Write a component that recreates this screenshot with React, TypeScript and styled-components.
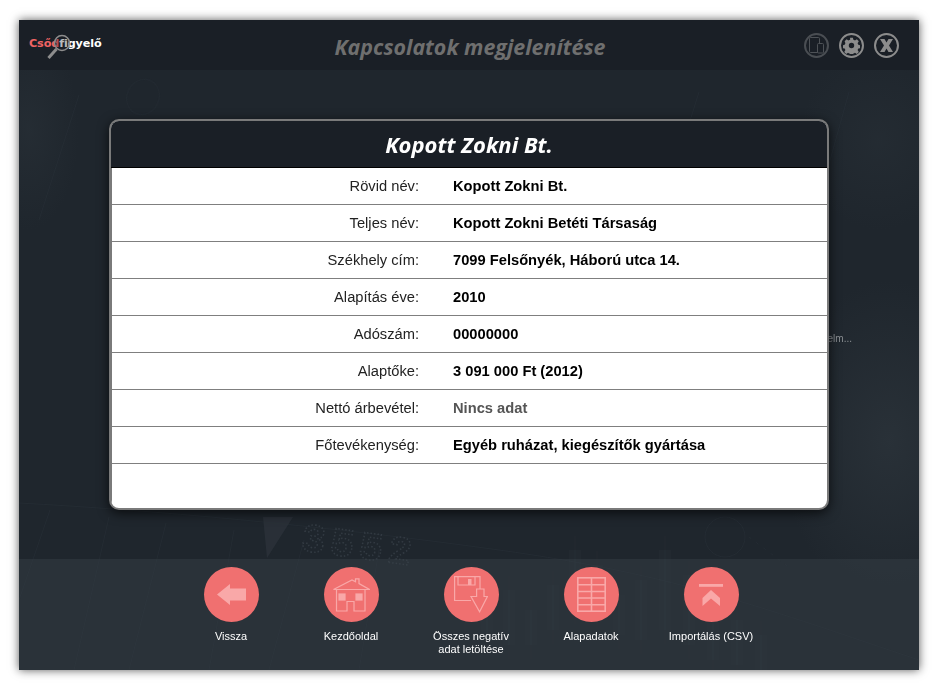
import React from "react";
import styled, { createGlobalStyle } from "styled-components";

const Global = createGlobalStyle`
  html, body { margin: 0; padding: 0; background: #fff; }
  body { font-family: "Liberation Sans", Arial, sans-serif; }
`;

const Page = styled.div`
  width: 941px;
  height: 692px;
  padding: 20px 22px 22px 19px;
  box-sizing: border-box;
  overflow: hidden;
`;

const Frame = styled.div`
  position: relative;
  width: 900px;
  height: 650px;
  display: flex;
  flex-direction: column;
  overflow: hidden;
  background: #1f262d;
  box-shadow: 0 0 9px rgba(0, 0, 0, 0.65);
`;

const Backdrop = styled.svg`
  position: absolute;
  left: 0;
  top: 0;
  width: 900px;
  height: 650px;
`;

const Header = styled.header`
  position: relative;
  height: 50px;
  flex: none;
  display: grid;
  grid-template-columns: 1fr;
  align-items: center;
  background: #1a1f26;
`;

const LogoWrap = styled.div`
  position: absolute;
  left: 10px;
  top: 13px;
  width: 76px;
  height: 30px;
`;

const LogoText = styled.div`
  font-family: "DejaVu Sans", sans-serif;
  font-weight: 700;
  font-size: 11.2px;
  line-height: 22px;
  letter-spacing: -0.1px;
  white-space: nowrap;
  color: #fff;
`;

const LogoRed = styled.span`
  color: #f06464;
`;

const LogoLens = styled.svg`
  position: absolute;
  left: 17px;
  top: 1px;
`;

const Title = styled.h1`
  margin: 0;
  text-align: center;
  font-family: "Open Sans", sans-serif;
  font-style: italic;
  font-weight: 700;
  font-size: 21.4px;
  line-height: 54px;
  height: 50px;
  color: #6f6f6f;
  padding-left: 2px;
`;

const HeaderActions = styled.div`
  position: absolute;
  right: 20px;
  top: 13px;
  display: flex;
  gap: 10px;
`;

const RoundIcon = styled.div<{ $dim?: boolean }>`
  width: 25px;
  height: 25px;
  box-sizing: border-box;
  border-radius: 50%;
  border: 2px solid ${(p) => (p.$dim ? "#4a4e53" : "#8c8c8c")};
  display: flex;
  align-items: center;
  justify-content: center;
`;

const Main = styled.main`
  position: relative;
  flex: 1;
  padding: 49px 0 0 90px;
  min-height: 0;
`;

const HiddenNote = styled.span`
  position: absolute;
  right: 67px;
  top: 262px;
  font-size: 10px;
  line-height: 14px;
  color: #8b8f93;
`;

const Modal = styled.section`
  position: relative;
  width: 720px;
  height: 391px;
  box-sizing: border-box;
  border: 2px solid #7a7a7a;
  border-radius: 10px;
  background: #fff;
  overflow: hidden;
  box-shadow: 0 3px 12px rgba(0, 0, 0, 0.7);
`;

const ModalHead = styled.h2`
  margin: 0;
  height: 46px;
  background: #1a1f26;
  border-bottom: 1px solid #000;
  text-align: center;
  font-family: "Open Sans", sans-serif;
  font-style: italic;
  font-weight: 700;
  font-size: 22px;
  line-height: 47px;
  color: #fff;
`;

const RowList = styled.div`
  border-left: 1px solid #7a7a7a;
  height: 342px;
`;

const Row = styled.div`
  display: grid;
  grid-template-columns: 307px 1fr;
  column-gap: 34px;
  height: 36px;
  border-bottom: 1px solid #7f7f7f;
  align-items: center;
  font-size: 14.7px;
`;

const Label = styled.div`
  text-align: right;
  color: #222;
`;

const Value = styled.div<{ $muted?: boolean }>`
  font-weight: 700;
  color: ${(p) => (p.$muted ? "#555" : "#000")};
`;

const Footer = styled.footer`
  position: relative;
  height: 111px;
  flex: none;
  box-sizing: border-box;
  padding: 8px 0 0 4px;
  display: flex;
  justify-content: center;
  background: rgba(58, 66, 74, 0.42);
`;

const Action = styled.div`
  width: 120px;
  display: flex;
  flex-direction: column;
  align-items: center;
`;

const Bubble = styled.div`
  width: 55px;
  height: 55px;
  border-radius: 50%;
  background: #f07070;
  display: flex;
  align-items: center;
  justify-content: center;
`;

const ActionLabel = styled.div`
  margin-top: 8px;
  width: 120px;
  text-align: center;
  font-size: 11px;
  line-height: 13px;
  color: #fff;
`;

const rows: [string, string, boolean?][] = [
  ["Rövid név:", "Kopott Zokni Bt."],
  ["Teljes név:", "Kopott Zokni Betéti Társaság"],
  ["Székhely cím:", "7099 Felsőnyék, Háború utca 14."],
  ["Alapítás éve:", "2010"],
  ["Adószám:", "00000000"],
  ["Alaptőke:", "3 091 000 Ft (2012)"],
  ["Nettó árbevétel:", "Nincs adat", true],
  ["Főtevékenység:", "Egyéb ruházat, kiegészítők gyártása"],
];

const ic = "#f9a8a8";

const BackIcon = () => (
  <svg width="29" height="21" viewBox="0 0 29 21">
    <path d="M0 10.500 L13 0 V4.500 H29 V16.500 H13 V21 Z" fill={ic} />
  </svg>
);

const HomeIcon = () => (
  <svg width="37" height="34" viewBox="0 0 37 34" fill="none" stroke={ic} strokeWidth="1.2">
    <path d="M0.500 11.500 L19 2 L22.500 3.800 V0.800 H26 V5.600 L36.500 11.500 Z" />
    <path d="M3.500 11.500 V33 H14 V23.500 H21 V33 H32 V11.500" />
    <rect x="6" y="16" width="6" height="6" fill={ic} />
    <rect x="23" y="16" width="6" height="6" fill={ic} />
  </svg>
);

const SaveIcon = () => (
  <svg width="34" height="37" viewBox="0 0 34 37" fill="none" stroke={ic} strokeWidth="1.2">
    <path d="M17 24.500 H0.600 V0.600 H26 V13" />
    <path d="M4 0.600 V9 H21 V0.600" />
    <rect x="14" y="3" width="3.500" height="6" fill={ic} stroke="none" />
    <path d="M22.600 13 H30 V20.500 H33.400 L25.600 35.800 L17 20.500 H22.600 Z" />
  </svg>
);

const TableIcon = () => (
  <svg width="29" height="35" viewBox="0 0 29 35" fill="none" stroke={ic} strokeWidth="1.6">
    <rect x="0.800" y="0.800" width="27.400" height="33.400" />
    <path d="M0.800 7.800 H28 M0.800 14.500 H28 M0.800 21 H28 M0.800 27.800 H28 M14.500 0.800 V34" />
  </svg>
);

const ImportIcon = () => (
  <svg width="24" height="22" viewBox="0 0 24 22">
    <rect x="0" y="0" width="24" height="2.800" fill={ic} />
    <path d="M12 6 L21 14 V22 L12 14.500 L3.500 22 V14 Z" fill={ic} />
  </svg>
);

const DevicesIcon = () => (
  <svg width="17" height="17" viewBox="0 0 17 17" fill="none" stroke="#4e5257" strokeWidth="1">
    <rect x="1.500" y="0.500" width="10" height="15" rx="1" />
    <rect x="9.500" y="6.500" width="6" height="9.500" rx="1" fill="#1a1f26" />
  </svg>
);

const GearIcon = () => (
  <svg width="17" height="17" viewBox="0 0 24 24">
    <path
      fill="#8c8c8c"
      fillRule="evenodd"
      d="M10 1 h4 l.6 3 a8.500 8.500 0 0 1 2.300 1 l2.600-1.700 2.800 2.800 -1.700 2.600 a8.500 8.500 0 0 1 1 2.300 l3 .6 v4 l-3 .6 a8.500 8.500 0 0 1-1 2.300 l1.700 2.600 -2.800 2.800 -2.600-1.700 a8.500 8.500 0 0 1-2.300 1 l-.6 3 h-4 l-.6-3 a8.500 8.500 0 0 1-2.300-1 l-2.600 1.700 -2.800-2.800 1.700-2.600 a8.500 8.500 0 0 1-1-2.300 l-3-.6 v-4 l3-.6 a8.500 8.500 0 0 1 1-2.300 L2.300 6.100 5.100 3.300 l2.600 1.700 a8.500 8.500 0 0 1 2.300-1 Z M12 8.200 a3.800 3.800 0 1 0 0 7.600 a3.800 3.800 0 1 0 0-7.600 Z"
    />
  </svg>
);

const CloseIcon = () => (
  <svg width="15" height="15" viewBox="0 0 15 15">
    <path d="M1 1 H5.500 L7.500 4.500 L9.500 1 H14 L10 7.500 L14 14 H9.500 L7.500 10.500 L5.500 14 H1 L5 7.500 Z" fill="#8c8c8c" />
  </svg>
);

const candles = [
  [440, 560, 40], [462, 585, 30], [484, 570, 55], [506, 590, 35], [528, 565, 45],
  [550, 530, 60], [572, 545, 50], [594, 575, 40], [616, 560, 60], [640, 530, 80],
  [664, 555, 70], [688, 590, 50], [712, 600, 45], [736, 615, 35],
];

const BackdropArt = () => (
  <Backdrop viewBox="0 0 900 650">
    <defs>
      <radialGradient id="glowA" cx="0.5" cy="0.5" r="0.5">
        <stop offset="0" stopColor="#2a3239" stopOpacity="0.9" />
        <stop offset="1" stopColor="#2a3239" stopOpacity="0" />
      </radialGradient>
    </defs>
    <ellipse cx="870" cy="420" rx="110" ry="160" fill="url(#glowA)" />
    <ellipse cx="10" cy="110" rx="50" ry="100" fill="url(#glowA)" opacity="0.6" />
    <ellipse cx="860" cy="120" rx="80" ry="90" fill="url(#glowA)" opacity="0.5" />
    <g stroke="#2c343c" strokeWidth="1" fill="none" opacity="0.42">
      <path d="M0 483 C 130 490 300 505 480 530 S 750 590 900 640" />
      <path d="M31 490 L0 580 M90 497 L55 650 M147 503 L110 650 M215 510 L190 650 M285 520 L250 650 M360 530 L340 650" />
      <path d="M680 72 L640 200 M830 72 L800 180 M60 75 L20 200" />
      <ellipse cx="124" cy="77" rx="16" ry="18" transform="rotate(25 124 77)" />
      <circle cx="706" cy="517" r="20" />
      <path d="M730 517 L771 548" strokeDasharray="3 6" />
    </g>
    <path d="M244 497 L274 497 L248 538 Z" fill="#2a3138" opacity="0.9" />
    <text
      x="281"
      y="530"
      fontFamily="Liberation Mono, monospace"
      fontSize="40"
      fontWeight="700"
      fill="none"
      stroke="#323a42"
      strokeWidth="1.600"
      strokeDasharray="1.500 2"
      transform="rotate(8 281 530)"
      letterSpacing="5"
    >
      3552
    </text>
    <g fill="#39414a" opacity="0.12">
      {candles.map(([x, y, h]) => (
        <rect key={x} x={x} y={y} width="12" height={h} />
      ))}
    </g>
    <g stroke="#39414a" strokeWidth="1" opacity="0.18">
      {candles.map(([x, y, h]) => (
        <line key={x} x1={x + 6} x2={x + 6} y1={y - 14} y2={y + h + 14} />
      ))}
    </g>
  </Backdrop>
);

const actions: [React.ReactNode, React.ReactNode][] = [
  [<BackIcon />, "Vissza"],
  [<HomeIcon />, "Kezdőoldal"],
  [<SaveIcon />, <>Összes negatív<br />adat letöltése</>],
  [<TableIcon />, "Alapadatok"],
  [<ImportIcon />, "Importálás (CSV)"],
];

export default function App() {
  return (
    <>
      <Global />
      <Page>
        <Frame>
          <BackdropArt />
          <Header>
            <Title>Kapcsolatok megjelenítése</Title>
            <LogoWrap>
              <LogoText>
                <LogoRed>Csőd</LogoRed>figyelő
              </LogoText>
              <LogoLens width="24" height="28" viewBox="0 0 24 28">
                <circle cx="16" cy="9" r="7.500" fill="rgba(26,31,38,0.3)" stroke="#8d8d8d" strokeWidth="1.500" />
                <line x1="10.500" y1="15" x2="2.500" y2="24" stroke="#8d8d8d" strokeWidth="3" />
              </LogoLens>
            </LogoWrap>
            <HeaderActions>
              <RoundIcon $dim><DevicesIcon /></RoundIcon>
              <RoundIcon><GearIcon /></RoundIcon>
              <RoundIcon><CloseIcon /></RoundIcon>
            </HeaderActions>
          </Header>
          <Main>
            <HiddenNote>elm...</HiddenNote>
            <Modal>
              <ModalHead>Kopott Zokni Bt.</ModalHead>
              <RowList>
                {rows.map(([l, v, m]) => (
                  <Row key={l}>
                    <Label>{l}</Label>
                    <Value $muted={m}>{v}</Value>
                  </Row>
                ))}
              </RowList>
            </Modal>
          </Main>
          <Footer>
            {actions.map(([icon, label], i) => (
              <Action key={i}>
                <Bubble>{icon}</Bubble>
                <ActionLabel>{label}</ActionLabel>
              </Action>
            ))}
          </Footer>
        </Frame>
      </Page>
    </>
  );
}
